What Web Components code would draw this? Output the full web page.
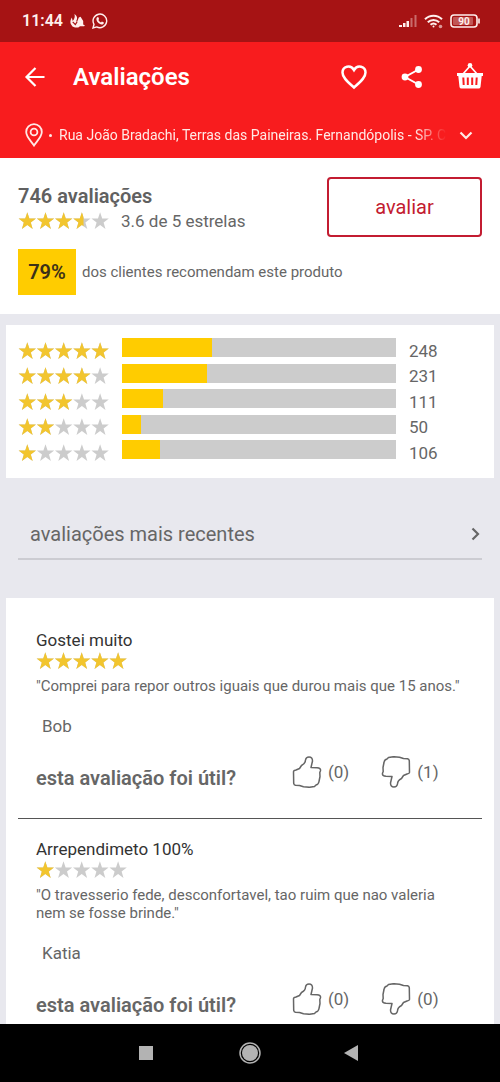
<!DOCTYPE html>
<html lang="pt-BR">
<head>
<meta charset="utf-8">
<meta name="viewport" content="width=device-width, initial-scale=1">
<title>Avaliações</title>
<style>
  html, body { margin: 0; height: 100%; }
  body { font-family: Roboto, sans-serif; color: #666; background: #e8e8ee; }
</style>
</head>
<body>
<reviews-page></reviews-page>
<script>
const define = (name, markup, update, observed = []) => {
  const template = document.createElement('template');
  template.innerHTML = markup;
  customElements.define(name, class extends HTMLElement {
    static observedAttributes = observed;
    constructor() {
      super();
      this.attachShadow({ mode: 'open' }).append(template.content.cloneNode(true));
    }
    connectedCallback() {
      if (update) update(this, this.shadowRoot);
    }
    attributeChangedCallback() {
      if (update && this.isConnected) update(this, this.shadowRoot);
    }
  });
};

define('status-bar', `
<style>
  :host { display: flex; align-items: center; justify-content: space-between; flex: none; height: 42px; padding: 0 19px 0 22px; background: #a61314; color: #fff0ee; }
  div { display: flex; align-items: center; }
  .left { gap: 6px; }
  .right { gap: 7px; }
  time { font-size: 16px; line-height: 20px; font-weight: 600; }
  svg { display: block; }
  text { font: 700 10px Roboto, sans-serif; }
</style>
<div class="left">
  <time>11:44</time>
  <svg width="17" height="14" viewBox="0 0 17 16" fill="currentColor"><path d="M5 0c3 2 4 5 2 8l1 1 2-5 2-1 3 5v4l2 1-1 1h-5c0 2-8 2-9-1C-1 10 1 6 2 4l1 4c2-2 3-5 2-8z"/><path d="M3 9l3 3 2-3" stroke="#a61314" stroke-width="1.3" fill="none"/></svg>
  <svg width="16" height="16" viewBox="0 0 16 16" fill="none" stroke="currentColor" stroke-width="1.4"><path d="M1 15l1-3.7a6.8 6.8 0 1 1 2.7 2.6z"/><path d="M5.2 4.3l1-.2.9 2-.7.9c.6 1.2 1.4 2 2.6 2.5l.9-1 2 .9c0 1.5-1 2.1-2.2 2.1C7 11.2 4.3 8.2 4.4 6c0-.7.4-1.3.8-1.7z" fill="currentColor" stroke="none"/></svg>
</div>
<div class="right">
  <svg width="18" height="14" viewBox="0 0 18 14" fill="currentColor"><path d="M0 11h3v2H0zM4 9h2.500v4H4zM7.500 7H10v6H7.500z"/><path d="M11.500 4H13.500v9h-2zM15.500 1H17.500v12h-2z" opacity=".4"/></svg>
  <svg width="19" height="15" viewBox="0 0 19 15" fill="none" stroke="currentColor" stroke-width="2"><path d="M1 5.200a12 12 0 0 1 17 0M3.800 8.300a8 8 0 0 1 11.400 0M6.500 10.800a4.500 4.500 0 0 1 6 0"/><circle cx="9.500" cy="12.500" r="1" fill="currentColor" stroke="none"/><circle cx="16.500" cy="12.500" r="1.800" fill="currentColor" stroke="none" opacity=".6"/></svg>
  <svg width="31" height="14" viewBox="0 0 31 14"><rect x="1" y="1" width="26" height="12" rx="3" fill="none" stroke="currentColor" stroke-width="1.600"/><rect x="3" y="3" width="20" height="8" rx="1" fill="currentColor" opacity=".3"/><path d="M29 4.500v5" stroke="currentColor" stroke-width="1.600"/><text x="14" y="10.500" text-anchor="middle" fill="currentColor">90</text></svg>
</div>`);

define('app-header', `
<style>
  :host { display: flex; align-items: center; flex: none; height: 70px; padding: 0 16px 0 20px; background: #f81c1e; color: #fff; }
  h1 { flex: 1; margin: 0 0 0 24px; font-size: 24px; line-height: 28px; font-weight: 600; }
  button { display: grid; place-items: center; width: 29px; height: 40px; margin: 0; padding: 0; border: 0; background: none; color: inherit; }
  .actions { display: flex; gap: 29px; }
  svg { display: block; }
</style>
<button aria-label="Voltar"><svg width="24" height="24" viewBox="0 0 24 24" fill="none" stroke="currentColor" stroke-width="2.200"><path d="M21.500 12H4M12.500 3L3.500 12l9 9"/></svg></button>
<h1><slot></slot></h1>
<div class="actions">
  <button aria-label="Favoritar"><svg width="28" height="28" viewBox="0 0 28 28" fill="none" stroke="currentColor" stroke-width="2.500"><path d="M14 24.500C8 19 2.500 15 2.500 9.500c0-6 8-8.500 11.500-2.500C17.500 1 25.500 3.500 25.500 9.500c0 5.500-5.500 9.500-11.500 15z"/></svg></button>
  <button aria-label="Compartilhar"><svg width="22" height="24" viewBox="0 0 22 24" fill="currentColor"><circle cx="4" cy="12" r="3.400"/><circle cx="17.500" cy="4.500" r="3.400"/><circle cx="17.500" cy="19.500" r="3.400"/><path d="M17.500 4.500L4 12l13.500 7.500" fill="none" stroke="currentColor" stroke-width="2"/></svg></button>
  <button aria-label="Cesta"><svg width="28" height="30" viewBox="0 0 28 30"><path d="M7 12l7-8 7 8" fill="none" stroke="currentColor" stroke-width="1.700"/><circle cx="14" cy="3.300" r="2.300" fill="currentColor"/><path d="M1 11h26v3h-1.300L24.500 25q-.3 1.500-2 1.500h-17q-1.700 0-2-1.500L2.300 14H1z" fill="currentColor"/><path d="M7.300 15.500l.4 7.500M11.800 15.500V23M16.200 15.500V23M20.700 15.500l-.4 7.500" stroke="#f81c1e" stroke-width="2"/></svg></button>
</div>`);

define('address-bar', `
<style>
  :host { display: block; flex: none; background: #f81c1e; color: #ffe9e6; }
  button { display: flex; align-items: center; width: 100%; height: 46px; margin: 0; padding: 0 27px 0 25px; border: 0; background: none; color: inherit; font: 400 14px/20px Roboto, sans-serif; text-align: left; }
  svg { display: block; flex: none; }
  .dot { width: 3px; height: 3px; margin: 0 7px 0 6px; border-radius: 50%; background: currentColor; flex: none; }
  .text { flex: 1; min-width: 0; overflow: hidden; white-space: nowrap; -webkit-mask-image: linear-gradient(90deg, #000 calc(100% - 32px), transparent); mask-image: linear-gradient(90deg, #000 calc(100% - 32px), transparent); }
  .chevron { margin-left: 12px; }
</style>
<button>
  <svg width="18" height="24" viewBox="0 0 18 24" fill="none" stroke="currentColor" stroke-width="1.800"><path d="M9 22.500C6.500 18.500 1.200 14 1.200 9a7.800 7.800 0 0 1 15.600 0c0 5-5.300 9.500-7.800 13.500z"/><circle cx="9" cy="9" r="3.400"/></svg>
  <span class="dot"></span>
  <span class="text"><slot></slot></span>
  <svg class="chevron" width="14" height="9" viewBox="0 0 14 9" fill="none" stroke="currentColor" stroke-width="2.200"><path d="M1.500 1.500L7 7l5.500-5.500"/></svg>
</button>`);

define('star-rating', `
<style>
  :host { display: block; flex: none; width: 91px; height: 18px; }
  svg { display: block; width: 100%; height: 100%; }
</style>
<svg viewBox="0 0 91 18" role="img"></svg>`, (host, root) => {
  const value = Number(host.getAttribute('value'));
  const svg = root.querySelector('svg');
  const star = 'M9.300 .3l2.100 6.100h6.600l-5.200 4 1.900 6.500-5.400-3.900-5.400 3.900 1.900-6.500-5.200-4h6.600z';
  const row = fill => [0, 1, 2, 3, 4].map(i => `<path fill="${fill}" transform="translate(${i * 18.2} 0)" d="${star}"/>`).join('');
  svg.setAttribute('aria-label', `${value} de 5 estrelas`);
  svg.innerHTML = `<clipPath id="on"><rect width="${value * 18.2}" height="18"/></clipPath>${row('#ccc')}<g clip-path="url(#on)">${row('#f2c52e')}</g>`;
}, ['value']);

define('rating-summary', `
<style>
  :host { display: block; box-sizing: border-box; padding: 19px 18px; background: #fff; }
  .top { display: flex; justify-content: space-between; align-items: flex-start; }
  h2 { margin: 7px 0 0; font-size: 20px; line-height: 24px; font-weight: 600; color: #606060; }
  .score { display: flex; align-items: center; gap: 12px; margin-top: 1px; font-size: 17px; line-height: 24px; }
  button { flex: none; width: 33%; min-width: 155px; height: 60px; margin: 0; border: 2px solid #c31c31; border-radius: 4px; background: #fff; color: #c31c31; font: 400 20px/24px Roboto, sans-serif; }
  .recommend { display: flex; align-items: center; gap: 6px; margin-top: 12px; font-size: 15px; line-height: 20px; }
  strong { display: grid; place-items: center; width: 58px; height: 46px; background: #fc0; color: #3c3118; font-size: 20px; font-weight: 600; }
</style>
<div class="top">
  <div>
    <h2>746 avaliações</h2>
    <div class="score"><star-rating value="3.6"></star-rating><span>3.6 de 5 estrelas</span></div>
  </div>
  <button>avaliar</button>
</div>
<div class="recommend"><strong>79%</strong><span>dos clientes recomendam este produto</span></div>`);

define('rating-row', `
<style>
  :host { display: flex; align-items: center; gap: 13px; height: 19px; font-size: 17px; line-height: 20px; }
  star-rating, span { margin-top: 6px; }
  .track { flex: 1; height: 19px; background: #ccc; }
  .fill { height: 100%; background: #fc0; }
  span { width: 73px; }
</style>
<star-rating></star-rating>
<div class="track"><div class="fill"></div></div>
<span><slot></slot></span>`, (host, root) => {
  root.querySelector('star-rating').setAttribute('value', host.getAttribute('stars'));
  root.querySelector('.fill').style.width = host.getAttribute('share') + '%';
});

define('rating-breakdown', `
<style>
  :host { display: flex; flex-direction: column; justify-content: space-between; box-sizing: border-box; height: 153px; margin: 11px 6px 0; padding: 13px 12px 19px; background: #fff; }
</style>
<rating-row stars="5" share="33">248</rating-row>
<rating-row stars="4" share="31">231</rating-row>
<rating-row stars="3" share="15">111</rating-row>
<rating-row stars="2" share="7">50</rating-row>
<rating-row stars="1" share="14">106</rating-row>`);

define('sort-picker', `
<style>
  :host { display: block; margin: 32px 18px 38px; }
  button { display: flex; align-items: center; justify-content: space-between; width: 100%; height: 50px; margin: 0; padding: 0 2px 0 12px; border: 0; border-bottom: 2px solid #ccccd2; background: none; color: #666; font: 400 20px/24px Roboto, sans-serif; }
</style>
<button><slot></slot><svg width="9" height="14" viewBox="0 0 9 14" fill="none" stroke="currentColor" stroke-width="2.200"><path d="M1.500 1.500L7 7l-5.500 5.500"/></svg></button>`);

define('vote-button', `
<style>
  :host { display: block; }
  button { display: flex; align-items: center; gap: 6px; margin: 0; padding: 0; border: 0; background: none; color: #666; font: 400 17px/20px Roboto, sans-serif; }
  svg { display: block; }
  :host([down]) svg { transform: rotate(180deg); }
</style>
<button><svg width="30" height="32" viewBox="0 0 30 32" fill="none" stroke="currentColor" stroke-width="1.500" stroke-linejoin="round"><path d="M1.500 15.500q0-1 2.500-1.500l3.500-1.500 2-3q4-2 4-5.500Q14 1 17 1q3.500 0 3.500 4l-1.500 6.500 6 .2q4 .3 3.500 3l-.7 1.800.2 4-1 5q-.5 3-3 3.500l-1.500 1.500-5 .8-6-.5-4-1.300-4-.2q-1.500-.3-1.800-2z"/></svg><slot></slot></button>`, (host, root) => {
  root.querySelector('button').setAttribute('aria-label', (host.hasAttribute('down') ? 'Não útil ' : 'Útil ') + host.textContent);
});

define('review-item', `
<style>
  :host { display: block; padding: 20px 18px 28px; border-bottom: 1px solid #555; }
  h3 { margin: 0; font-size: 17px; line-height: 20px; font-weight: 400; color: #333; }
  star-rating { margin-top: 2px; }
  blockquote { margin: 7px 0 0; font-size: 15px; line-height: 18px; }
  .author { margin: 21px 6px 0; font-size: 17px; line-height: 20px; }
  .feedback { display: flex; align-items: center; margin-top: 18px; }
  .question { flex: none; margin: 12px 56px 0 0; font-size: 20px; line-height: 24px; font-weight: 600; }
  .votes { display: flex; gap: 32px; }
</style>
<h3><slot name="title"></slot></h3>
<star-rating></star-rating>
<blockquote><slot></slot></blockquote>
<p class="author"><slot name="author"></slot></p>
<div class="feedback">
  <p class="question">esta avaliação foi útil?</p>
  <div class="votes"><vote-button class="up"></vote-button><vote-button down class="down"></vote-button></div>
</div>`, (host, root) => {
  root.querySelector('star-rating').setAttribute('value', host.getAttribute('stars'));
  root.querySelector('.up').textContent = `(${host.getAttribute('up')})`;
  root.querySelector('.down').textContent = `(${host.getAttribute('down')})`;
});

define('review-list', `
<style>
  :host { display: block; margin: 0 6px; padding: 12px 12px; background: #fff; }
</style>
<slot></slot>`);

define('nav-bar', `
<style>
  :host { display: flex; align-items: center; justify-content: center; gap: 80px; flex: none; height: 58px; background: #000; }
  button { display: grid; place-items: center; width: 22px; height: 22px; margin: 0; padding: 0; border: 0; background: none; color: #b3b3b3; }
  svg { overflow: visible; }
</style>
<button aria-label="Recentes"><svg width="22" height="22" viewBox="0 0 22 22"><path d="M2 4h14v14H2z" fill="currentColor"/></svg></button>
<button aria-label="Início"><svg width="22" height="22" viewBox="0 0 22 22"><circle cx="11" cy="11" r="10" fill="none" stroke="currentColor" stroke-width="1.500"/><circle cx="11" cy="11" r="8" fill="currentColor"/></svg></button>
<button aria-label="Voltar"><svg width="22" height="22" viewBox="0 0 22 22"><path d="M17 3v16L3 11z" fill="currentColor"/></svg></button>`);

define('reviews-page', `
<style>
  :host { display: flex; flex-direction: column; height: 100vh; }
  main { flex: 1; min-height: 0; overflow: hidden; background: #e8e8ee; }
</style>
<status-bar></status-bar>
<app-header>Avaliações</app-header>
<address-bar>Rua João Bradachi, Terras das Paineiras. Fernandópolis - SP. CEP</address-bar>
<main>
  <rating-summary></rating-summary>
  <rating-breakdown></rating-breakdown>
  <sort-picker>avaliações mais recentes</sort-picker>
  <review-list>
    <review-item stars="5" up="0" down="1">
      <span slot="title">Gostei muito</span>
      "Comprei para repor outros iguais que durou mais que 15 anos."
      <span slot="author">Bob</span>
    </review-item>
    <review-item stars="1" up="0" down="0">
      <span slot="title">Arrependimeto 100%</span>
      "O travesserio fede, desconfortavel, tao ruim que nao valeria nem se fosse brinde."
      <span slot="author">Katia</span>
    </review-item>
  </review-list>
</main>
<nav-bar></nav-bar>`);
</script>
</body>
</html>
